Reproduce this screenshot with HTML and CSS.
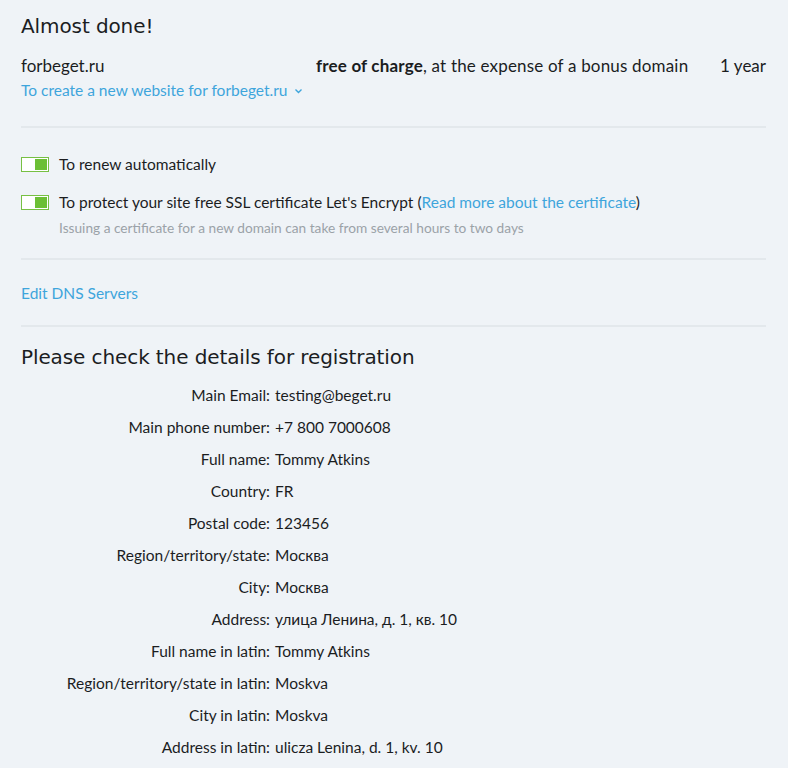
FILE: index.html
```html
<!DOCTYPE html>
<html lang="en">
<head>
<meta charset="utf-8">
<title>Almost done!</title>
<link rel="stylesheet" href="styles.css">
</head>
<body>
<main class="page">
  <section class="block">
    <h1 class="title">Almost done!</h1>
    <div class="domain-row">
      <span class="domain">forbeget.ru</span>
      <span class="price"><b>free of charge</b>, at the expense of a bonus domain</span>
      <span class="term">1 year</span>
    </div>
    <a class="link site-link" href="#">To create a new website for forbeget.ru
      <svg class="chev" width="9" height="6" viewBox="0 0 9 6"><path d="M1.5 1.5 L4.5 4.5 L7.5 1.5" fill="none" stroke="currentColor" stroke-width="1.4"/></svg>
    </a>
  </section>
  <hr class="divider first">
  <section class="options">
    <div class="opt">
      <span class="toggle"><span class="knob"></span></span>
      <span>To renew automatically</span>
    </div>
    <div class="opt second">
      <span class="toggle"><span class="knob"></span></span>
      <span>To protect your site free SSL certificate Let's Encrypt (<a class="link" href="#">Read more about the certificate</a>)</span>
    </div>
    <div class="hint">Issuing a certificate for a new domain can take from several hours to two days</div>
  </section>
  <hr class="divider">
  <a class="link dns" href="#">Edit DNS Servers</a>
  <hr class="divider">
  <h2 class="title sub">Please check the details for registration</h2>
  <dl class="details">
    <dt>Main Email:</dt><dd>testing@beget.ru</dd>
    <dt>Main phone number:</dt><dd>+7 800 7000608</dd>
    <dt>Full name:</dt><dd>Tommy Atkins</dd>
    <dt>Country:</dt><dd>FR</dd>
    <dt>Postal code:</dt><dd>123456</dd>
    <dt>Region/territory/state:</dt><dd>Москва</dd>
    <dt>City:</dt><dd>Москва</dd>
    <dt>Address:</dt><dd>улица Ленина, д. 1, кв. 10</dd>
    <dt>Full name in latin:</dt><dd>Tommy Atkins</dd>
    <dt>Region/territory/state in latin:</dt><dd>Moskva</dd>
    <dt>City in latin:</dt><dd>Moskva</dd>
    <dt>Address in latin:</dt><dd>ulicza Lenina, d. 1, kv. 10</dd>
  </dl>
</main>
</body>
</html>
```

FILE: styles.css
```css
* { box-sizing: border-box; }
html, body { margin: 0; padding: 0; }
body {
  background: #eff3f7;
  color: #1b1d1f;
  font-family: "Lato", "Noto Sans", sans-serif;
  font-size: 15.5px;
  line-height: 24px;
}
.page {
  width: 788px;
  padding: 14px 22px 0 21px;
}
.title {
  margin: 0;
  font-family: "DejaVu Sans", sans-serif;
  font-weight: normal;
  font-size: 20px;
  letter-spacing: -0.1px;
  line-height: 24px;
  color: #1b1d1f;
}
.domain-row {
  margin-top: 16px;
  display: grid;
  grid-template-columns: 295px 1fr auto;
  font-size: 17px;
}
.price { letter-spacing: 0.18px; }
.price b { font-weight: bold; }
.term { text-align: right; }
.link {
  color: #3ea5dc;
  text-decoration: none;
}
.site-link {
  display: inline-flex;
  align-items: center;
  gap: 7px;
}
.chev { margin-top: 2px; }
.divider {
  margin: 24px 0 0;
  border: 0;
  height: 2px;
  background: #e3e8ec;
}
.options { margin-top: 24px; }
.opt {
  display: flex;
  align-items: center;
  gap: 10px;
}
.opt.second { margin-top: 14px; }
.toggle {
  flex: none;
  width: 28px;
  height: 15px;
  border: 1px solid #77c043;
  background: #fff;
  display: flex;
  justify-content: flex-end;
  padding: 1px;
}
.knob {
  width: 12px;
  height: 11px;
  background: #6cbf35;
}
.hint {
  margin-top: 5px;
  padding-left: 38px;
  font-size: 13.7px;
  line-height: 18px;
  color: #9ba2a8;
}
.options + .divider { margin-top: 21px; }
.dns {
  display: block;
  margin-top: 21px;
}
.dns + .divider { margin-top: 20px; }
.sub { margin-top: 18px; }
.details {
  margin: 10px 0 0;
  display: grid;
  grid-template-columns: 249px 1fr;
  column-gap: 5px;
  line-height: 32px;
}
.details dt { text-align: right; }
.details dd { margin: 0; }
```
